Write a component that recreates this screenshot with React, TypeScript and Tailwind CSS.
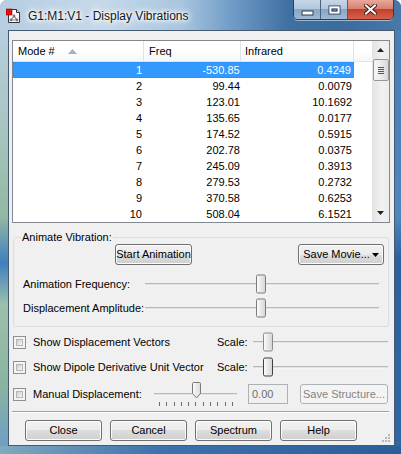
import clsx from "clsx";
import type { ReactNode } from "react";

const rows = [
  ["1", "-530.85", "0.4249"],
  ["2", "99.44", "0.0079"],
  ["3", "123.01", "10.1692"],
  ["4", "135.65", "0.0177"],
  ["5", "174.52", "0.5915"],
  ["6", "202.78", "0.0375"],
  ["7", "245.09", "0.3913"],
  ["8", "279.53", "0.2732"],
  ["9", "370.58", "0.6253"],
  ["10", "508.04", "6.1521"],
];

function Button({
  children,
  className,
  disabled,
}: {
  children: ReactNode;
  className?: string;
  disabled?: boolean;
}) {
  return (
    <div
      className={clsx(
        "flex items-center justify-center rounded-[3px] border leading-none",
        disabled
          ? "border-[#adb2b5] bg-[#f4f4f4] text-[#838383]"
          : "border-[#707070] bg-[linear-gradient(#f2f2f2,#ebebeb_50%,#dddddd_50%,#cfcfcf)] text-black shadow-[inset_0_0_0_1px_#fcfcfc]",
        className,
      )}
    >
      {children}
    </div>
  );
}

function Thumb({ className }: { className: string }) {
  return (
    <div
      className={clsx(
        "absolute top-1/2 h-[19px] w-[10px] -translate-y-1/2 rounded-[2px] border bg-[linear-gradient(90deg,#fbfbfb,#e4e4e4_60%,#d6d6d6)]",
        className,
      )}
    />
  );
}

function TrackLine() {
  return <div className="h-[3px] w-full border-t border-b border-t-[#b9b9b9] border-b-[#f4f4f4] bg-[#e2e2e2]" />;
}

function Checkbox() {
  return (
    <div className="h-[13px] w-[13px] shrink-0 border border-[#8e8f8f] bg-[#f4f4f4] p-[2px]">
      <div className="h-full w-full border border-[#b4b5b5] bg-[linear-gradient(135deg,#cdcdcd,#f6f6f6)]" />
    </div>
  );
}

function TitleIcon() {
  return (
    <svg width="16" height="16" viewBox="0 0 16 16">
      <path d="M2.5 1.5h8l3 3v10h-11z" fill="#fff" stroke="#333" />
      <path d="M10.5 1.5v3h3" fill="#ddd" stroke="#333" />
      <rect x="0" y="1" width="6" height="6" fill="#e01010" stroke="#800" strokeWidth="0.6" />
      <path d="M8 8l-3 4M8 8l3 4M5 12h6" stroke="#888" strokeWidth="1.2" fill="none" />
      <circle cx="8" cy="8" r="1.4" fill="#777" />
      <circle cx="5" cy="12" r="1.4" fill="#777" />
      <circle cx="11" cy="12" r="1.4" fill="#777" />
    </svg>
  );
}

function CaptionButtons() {
  return (
    <div className="mr-[7px] ml-auto flex h-[20px] self-start overflow-hidden rounded-b-[5px] border border-t-0 border-[#2c3e55] shadow-[0_1px_0_rgba(255,255,255,0.5)]">
      <div className="flex w-[27px] items-center justify-center border-r border-[#4a617d] bg-[linear-gradient(#c7d7e8,#b3c7dd_45%,#8aa6c6_50%,#9fb9d6)]">
        <svg width="13" height="6" viewBox="0 0 13 6" className="mt-[6px]">
          <rect x="1" y="1" width="11" height="4" fill="#fff" stroke="#2b3d52" />
        </svg>
      </div>
      <div className="flex w-[27px] items-center justify-center border-r border-[#4a617d] bg-[linear-gradient(#c7d7e8,#b3c7dd_45%,#8aa6c6_50%,#9fb9d6)]">
        <svg width="13" height="10" viewBox="0 0 13 10">
          <rect x="1" y="1" width="11" height="8" fill="none" stroke="#2b3d52" />
          <rect x="2.5" y="2.5" width="8" height="5" fill="none" stroke="#fff" strokeWidth="2" />
          <rect x="4" y="4" width="5" height="2" fill="none" stroke="#2b3d52" />
        </svg>
      </div>
      <div className="flex w-[45px] items-center justify-center bg-[linear-gradient(#e9a89a,#d7826f_45%,#c4412c_50%,#d4614a)]">
        <svg width="13" height="11" viewBox="0 0 13 11">
          <path d="M2 1.5l9 8M11 1.5l-9 8" stroke="#4a1a12" strokeWidth="4" strokeLinecap="square" />
          <path d="M2 1.5l9 8M11 1.5l-9 8" stroke="#fff" strokeWidth="2" strokeLinecap="square" />
        </svg>
      </div>
    </div>
  );
}

function ListView() {
  return (
    <div className="mt-[9px] ml-[3px] flex h-[183px] w-[378px] border border-[#828790] bg-white">
      <div className="flex w-[359px] flex-col overflow-hidden">
        <div className="flex h-[21px] shrink-0 border-b border-[#e5e5e5] bg-[linear-gradient(#ffffff,#ffffff_50%,#f5f6f7)]">
          <div className="flex w-[131px] items-center border-r border-[#dfe2e6] pl-[5px]">
            Mode #
            <svg width="9" height="5" viewBox="0 0 9 5" className="ml-[13px]">
              <path d="M0 5L4.5 0L9 5z" fill="#a7b0ba" />
            </svg>
          </div>
          <div className="flex w-[97px] items-center border-r border-[#dfe2e6] pl-[5px]">Freq</div>
          <div className="flex w-[113px] items-center border-r border-[#dfe2e6] pl-[4px]">Infrared</div>
          <div className="w-[18px]" />
        </div>
        {rows.map((r, i) => (
          <div
            key={r[0]}
            className={clsx(
              "flex h-[16px] w-[341px] shrink-0 items-center",
              i === 0 && "border border-dotted border-[#cc6600] bg-[#3399ff] text-white",
            )}
          >
            <div className="w-[131px] pr-[2px] text-right">{r[0]}</div>
            <div className="w-[97px] pr-[1px] text-right">{r[1]}</div>
            <div className="w-[113px] pr-[2px] text-right">{r[2]}</div>
          </div>
        ))}
      </div>
      <div className="flex w-[17px] flex-col items-center bg-[linear-gradient(90deg,#e3e3e3,#f1f1f1_60%,#ededed)]">
        <div className="flex h-[18px] items-center justify-center">
          <svg width="7" height="4" viewBox="0 0 7 4">
            <path d="M0 4L3.5 0L7 4z" fill="#222" />
          </svg>
        </div>
        <div className="flex h-[22px] w-[16px] flex-col items-center justify-center gap-[1px] rounded-[2px] border border-[#979797] bg-[linear-gradient(90deg,#f6f6f6,#ebebeb_50%,#d8d8d8)]">
          <div className="h-[1px] w-[6px] bg-[#555]" />
          <div className="h-[1px] w-[6px] bg-[#555]" />
          <div className="h-[1px] w-[6px] bg-[#555]" />
          <div className="h-[1px] w-[6px] bg-[#555]" />
        </div>
        <div className="flex-1" />
        <div className="flex h-[18px] items-center justify-center">
          <svg width="7" height="4" viewBox="0 0 7 4">
            <path d="M0 0L7 0L3.5 4z" fill="#222" />
          </svg>
        </div>
      </div>
    </div>
  );
}

function AnimateGroup() {
  return (
    <div className="relative mt-[14px] ml-[4px] h-[90px] w-[376px] rounded-[3px] border border-[#d5dfe5]">
      <div className="absolute top-[-8px] left-[7px] bg-[#f0f0f0] px-[1px] leading-[14px]">Animate Vibration:</div>
      <div className="mt-[6px] flex h-[21px]">
        <Button className="ml-[101px] w-[77px]">Start Animation</Button>
        <Button className="ml-[106px] w-[86px]">
          Save Movie...
          <svg width="7" height="4" viewBox="0 0 7 4" className="ml-[2px]">
            <path d="M0 0L7 0L3.5 4z" fill="#000" />
          </svg>
        </Button>
      </div>
      <div className="mt-[9px] flex h-[20px] items-center">
        <div className="w-[131px] pl-[9px]">Animation Frequency:</div>
        <div className="relative flex h-[20px] w-[234px] items-center">
          <TrackLine />
          <Thumb className="left-[111px] border-[#7a7a7a]" />
        </div>
      </div>
      <div className="mt-[4px] flex h-[20px] items-center">
        <div className="w-[131px] pl-[9px]">Displacement Amplitude:</div>
        <div className="relative flex h-[20px] w-[234px] items-center">
          <TrackLine />
          <Thumb className="left-[111px] border-[#7a7a7a]" />
        </div>
      </div>
    </div>
  );
}

function ScaleRow({ label, className, dark }: { label: string; className: string; dark?: boolean }) {
  return (
    <div className={clsx("ml-[4px] flex h-[20px] items-center", className)}>
      <Checkbox />
      <div className="ml-[7px] w-[184px] whitespace-nowrap">{label}</div>
      <div className="w-[36px]">Scale:</div>
      <div className="relative flex h-[20px] w-[135px] items-center">
        <TrackLine />
        <Thumb className={clsx("left-[10px]", dark ? "border-[#3f3f3f]" : "border-[#8a8a8a]")} />
      </div>
    </div>
  );
}

function ManualRow() {
  return (
    <div className="mt-[7px] ml-[4px] flex h-[20px] items-center">
      <Checkbox />
      <div className="ml-[7px] w-[121px]">Manual Displacement:</div>
      <div className="relative flex h-[20px] w-[83px] items-center">
        <TrackLine />
        <svg width="9" height="17" viewBox="0 0 9 17" className="absolute top-[-2px] left-[38px]">
          <defs>
            <linearGradient id="mt" x1="0" x2="1" y1="0" y2="0">
              <stop offset="0" stopColor="#fcfcfc" />
              <stop offset="1" stopColor="#dadada" />
            </linearGradient>
          </defs>
          <path d="M0.5 1.5q0-1 1-1h6q1 0 1 1v10l-4 4.5l-4-4.5z" fill="url(#mt)" stroke="#7a7a7a" />
        </svg>
        <div className="absolute top-[18px] left-[5px] flex w-[74px] justify-between">
          {Array.from({ length: 11 }).map((_, i) => (
            <div key={i} className="h-[4px] w-[1px] bg-[#6a6a6a]" />
          ))}
        </div>
      </div>
      <div className="ml-[11px] flex h-[20px] w-[40px] items-center border border-[#adb2b5] pl-[3px] text-[#6d6d6d]">
        0.00
      </div>
      <Button disabled className="ml-[12px] h-[20px] w-[88px]">
        Save Structure...
      </Button>
    </div>
  );
}

export default function App() {
  return (
    <div className="relative h-[454px] w-[401px] overflow-hidden rounded-t-[7px] bg-[linear-gradient(90deg,#9fc0c2,#5d93c2_40%,#2f65a3_80%,#2b5f9c)] font-['Liberation_Sans',Arial,sans-serif] text-[11px] text-black">
      <div className="flex h-[30px] bg-[linear-gradient(90deg,#b6cde2_0%,#c6d9ea_25%,#a9c6e0_45%,#6f9bc7_58%,#3f70a2_72%,#3b6c9e_85%,#4878a8_100%)]">
        <div className="flex items-start pt-[8px] pl-[6px]">
          <TitleIcon />
          <div className="ml-[6px] text-[12px] leading-[16px] text-[#101820] [text-shadow:0_0_10px_#fff,0_0_8px_#fff,0_0_5px_#fff,0_0_3px_#fff]">
            G1:M1:V1 - Display Vibrations
          </div>
        </div>
        <CaptionButtons />
      </div>
      <div className="flex h-[416px]">
        <div className="w-[8px] bg-[linear-gradient(180deg,#b7cee0_0%,#a6c4bd_25%,#92b8a2_45%,#3f7fc0_56%,#9cc0aa_66%,#8bb4a0_85%,#6e9fc3_100%)]" />
        <div className="relative w-[387px] border border-[#46596f] bg-[#f0f0f0]">
          <ListView />
          <AnimateGroup />
          <ScaleRow label="Show Displacement Vectors" className="mt-[5px]" />
          <ScaleRow label="Show Dipole Derivative Unit Vector" className="mt-[5px]" dark />
          <ManualRow />
          <div className="mt-[7px] ml-[3px] w-[377px] border-t border-b border-t-[#a0a0a0] border-b-white" />
          <div className="mt-[7px] ml-[16px] flex gap-[8px]">
            <Button className="h-[21px] w-[77px]">Close</Button>
            <Button className="h-[21px] w-[77px]">Cancel</Button>
            <Button className="h-[21px] w-[77px]">Spectrum</Button>
            <Button className="h-[21px] w-[77px]">Help</Button>
          </div>
          <svg width="10" height="10" viewBox="0 0 10 10" className="absolute right-[3px] bottom-[2px]">
            <g fill="#b8b8b8">
              <rect x="7" y="1" width="2" height="2" />
              <rect x="4" y="4" width="2" height="2" />
              <rect x="7" y="4" width="2" height="2" />
              <rect x="1" y="7" width="2" height="2" />
              <rect x="4" y="7" width="2" height="2" />
              <rect x="7" y="7" width="2" height="2" />
            </g>
          </svg>
        </div>
        <div className="flex-1 bg-[linear-gradient(180deg,#4a7fb6_0%,#4f86bd_45%,#2a609d_55%,#2f67a5_100%)]" />
      </div>
      <div className="h-[8px] bg-[linear-gradient(90deg,#7fa9bf,#3c72ad_40%,#2a5e9b)]" />
    </div>
  );
}
